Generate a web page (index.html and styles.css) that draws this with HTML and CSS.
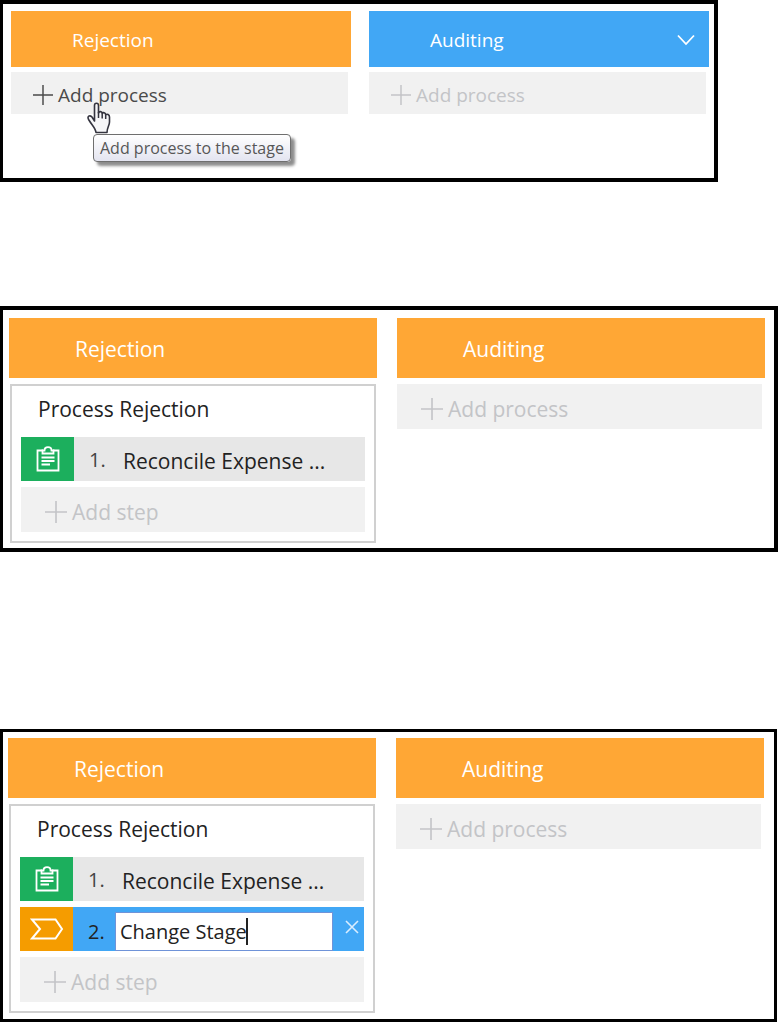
FILE: index.html
```html
<!DOCTYPE html>
<html lang="en">
<head>
    <meta charset="UTF-8">
    <meta name="viewport" content="width=device-width, initial-scale=1.0">
    <title>Case Stages</title>
    <link rel="stylesheet" href="styles.css">
</head>
<body>
    <!-- shared icons -->
    <svg class="sprite" aria-hidden="true">
        <symbol id="icon-plus" viewBox="0 0 22 22">
            <path d="M11 0V22M0 11H22" fill="none" stroke="currentColor" stroke-width="1.6"/>
        </symbol>
        <symbol id="icon-clipboard" viewBox="0 0 24 26">
            <g fill="none" stroke="#fff" stroke-width="1.8">
                <path d="M7 4.500H1.500V24.500H22.500V4.500H17"/>
                <path d="M6.500 7.500V4.500H8.500C8.500 2.500 10 1.200 12 1.200S15.500 2.500 15.500 4.500H17.500V7.500Z"/>
                <path d="M5.500 11.500H18.500M5.500 15H18.500M5.500 18.500H14"/>
            </g>
        </symbol>
    </svg>

    <section class="panel panel-small">
        <div class="stage">
            <h2 class="stage-header">Rejection</h2>
            <div class="add-wrap">
                <button class="add add-active" aria-describedby="add-tip">
                    <svg class="plus"><use href="#icon-plus"/></svg><span>Add process</span>
                </button>
                <svg class="pointer" viewBox="0 0 24 32" aria-hidden="true">
                    <path d="M7.500 19V3.500C7.500 .5 11.500 .5 11.500 3.500V11C12 9 15 9.200 15.200 11.500C16 10 18.600 10.500 18.700 12.800C20 11.500 22.500 12.500 22.500 15V20C22.500 23.500 20 25.500 20 30.500H9C8.500 26 5 23.500 1.600 17.500C0 14.500 2.500 12.500 5 15Z" fill="#f6f6f8" stroke="#34343f" stroke-width="1.6" stroke-linejoin="round"/>
                    <path d="M11.500 10V16M15.200 11.500V16.500M18.700 12.800V17" fill="none" stroke="#34343f" stroke-width="1.5"/>
                </svg>
                <div class="tooltip" id="add-tip" role="tooltip">Add process to the stage</div>
            </div>
        </div>
        <div class="stage">
            <h2 class="stage-header selected">Auditing
                <button class="menu" aria-label="Stage menu">
                    <svg width="18" height="12" viewBox="0 0 18 12"><path d="M1 1.500L9 10L17 1.500" fill="none" stroke="#fff" stroke-width="1.8"/></svg>
                </button>
            </h2>
            <button class="add"><svg class="plus"><use href="#icon-plus"/></svg><span>Add process</span></button>
        </div>
    </section>

    <section class="panel panel-step">
        <div class="stage">
            <h2 class="stage-header">Rejection</h2>
            <div class="process">
                <h3 class="process-title">Process Rejection</h3>
                <div class="step">
                    <span class="step-icon"><svg width="24" height="26"><use href="#icon-clipboard"/></svg></span>
                    <span class="step-number">1.</span>
                    <span class="step-name">Reconcile Expense ...</span>
                </div>
                <button class="add"><svg class="plus"><use href="#icon-plus"/></svg><span>Add step</span></button>
            </div>
        </div>
        <div class="stage">
            <h2 class="stage-header">Auditing</h2>
            <button class="add"><svg class="plus"><use href="#icon-plus"/></svg><span>Add process</span></button>
        </div>
    </section>

    <section class="panel panel-edit">
        <div class="stage">
            <h2 class="stage-header">Rejection</h2>
            <div class="process">
                <h3 class="process-title">Process Rejection</h3>
                <div class="step">
                    <span class="step-icon"><svg width="24" height="26"><use href="#icon-clipboard"/></svg></span>
                    <span class="step-number">1.</span>
                    <span class="step-name">Reconcile Expense ...</span>
                </div>
                <div class="step step-editing">
                    <span class="step-icon">
                        <svg width="34" height="22" viewBox="0 0 34 22"><path d="M2 1.500H25.500L32 11L25.500 20.500H2L10 11Z" fill="none" stroke="#fff" stroke-width="2"/></svg>
                    </span>
                    <label class="step-number" for="step-name">2.</label>
                    <div class="step-field">
                        <input type="text" id="step-name" value="Change Stage">
                        <span class="caret"></span>
                    </div>
                    <button class="remove" aria-label="Remove step">
                        <svg width="14" height="14" viewBox="0 0 14 14"><path d="M1 1L13 13M13 1L1 13" fill="none" stroke="#d9edff" stroke-width="1.6"/></svg>
                    </button>
                </div>
                <button class="add"><svg class="plus"><use href="#icon-plus"/></svg><span>Add step</span></button>
            </div>
        </div>
        <div class="stage">
            <h2 class="stage-header">Auditing</h2>
            <button class="add"><svg class="plus"><use href="#icon-plus"/></svg><span>Add process</span></button>
        </div>
    </section>
</body>
</html>
```
FILE: styles.css
```css
* {
    box-sizing: border-box;
}

body {
    margin: 0;
    background-color: #fff;
    font-family: 'Open Sans', 'Noto Sans', sans-serif;
    font-size: 21px;
    color: #222;
}

button,
input {
    font: inherit;
    border: none;
}

button {
    cursor: pointer;
}

svg {
    display: block;
    flex-shrink: 0;
}

.sprite {
    display: none;
}

/* panels */
.panel {
    display: flex;
    align-items: flex-start;
    gap: 20px;
    border: 4px solid #000;
    border-left-width: 3px;
}

.panel-small {
    gap: 18px;
    margin: 0 60px 124px 0;
    padding: 7px 5px 64px 8px;
    font-size: 19px;
}

.panel-step {
    margin-bottom: 177px;
    padding: 8px 9px 5px 6px;
}

.panel-edit {
    margin-right: 1px;
    padding: 6px 10px 6px 5px;
    border-width: 3px;
}

/* stages */
.stage {
    flex: 1;
    min-width: 0;
}

.stage-header {
    display: flex;
    align-items: center;
    justify-content: space-between;
    height: 60px;
    margin: 0 0 6px;
    padding: 2px 8px 0 66px;
    background-color: #ffa735;
    color: #fff;
    font-size: inherit;
    font-weight: 400;
}

.panel-small .stage-header {
    height: 56px;
    margin-bottom: 5px;
    padding-left: 61px;
}

.stage-header.selected {
    background-color: #41a7f5;
}

.menu {
    padding: 6px;
    background: none;
}

/* add buttons */
.add {
    display: flex;
    align-items: center;
    gap: 5px;
    width: calc(100% - 3px);
    height: 45px;
    padding: 4px 0 0 24px;
    background-color: #f1f1f1;
    color: #c3c4c7;
}

.panel-small .add {
    height: 42px;
    padding-left: 22px;
}

.panel-small .add-active {
    color: #4a4a4a;
}

.plus {
    width: 22px;
    height: 22px;
}

.panel-small .plus {
    width: 20px;
    height: 20px;
}

.add-wrap {
    position: relative;
}

.pointer {
    position: absolute;
    top: 30px;
    left: 76px;
    width: 24px;
    height: 32px;
}

.tooltip {
    position: absolute;
    top: 62px;
    left: 82px;
    padding: 0 6px;
    border: 1px solid #6f6f6f;
    border-radius: 4px;
    background: linear-gradient(#fff, #e3e4f0);
    box-shadow: 4px 4px 3px rgba(0, 0, 0, 0.45);
    color: #575757;
    font-size: 16px;
    line-height: 26px;
    white-space: nowrap;
}

/* process */
.process {
    display: flex;
    flex-direction: column;
    gap: 6px;
    margin: 0 1px;
    padding: 0 9px 9px;
    border: 2px solid #d0d0d0;
}

.process .add {
    width: 100%;
}

.process-title {
    height: 45px;
    margin: 0;
    padding-left: 17px;
    font-size: inherit;
    font-weight: 400;
    line-height: 46px;
}

.step {
    display: flex;
    align-items: center;
    height: 44px;
    background-color: #e7e7e7;
}

.step-icon {
    display: flex;
    align-items: center;
    justify-content: center;
    width: 53px;
    height: 100%;
    background-color: #1caf5d;
}

.step-number {
    width: 42px;
    padding-left: 15px;
    color: #444;
    font-size: 20px;
}

.step-name {
    padding: 4px 0 0 7px;
    white-space: nowrap;
}

.step-editing {
    background-color: #41a7f5;
}

.step-editing .step-icon {
    background-color: #f59c00;
}

.step-editing .step-number {
    padding-top: 4px;
    color: #222;
}

.step-field {
    position: relative;
    flex: 1;
    height: 39px;
    margin-top: 5px;
}

.step-field input {
    width: 100%;
    height: 100%;
    padding: 0 4px;
    border: 1px solid #6f93d8;
    background-color: #fff;
    color: #222;
    font-size: 20px;
    outline: none;
}

.caret {
    position: absolute;
    top: 6px;
    left: 131px;
    width: 2px;
    height: 27px;
    background-color: #222;
}

.remove {
    align-self: flex-start;
    padding: 13px 5px 0 12px;
    background: none;
}
```
